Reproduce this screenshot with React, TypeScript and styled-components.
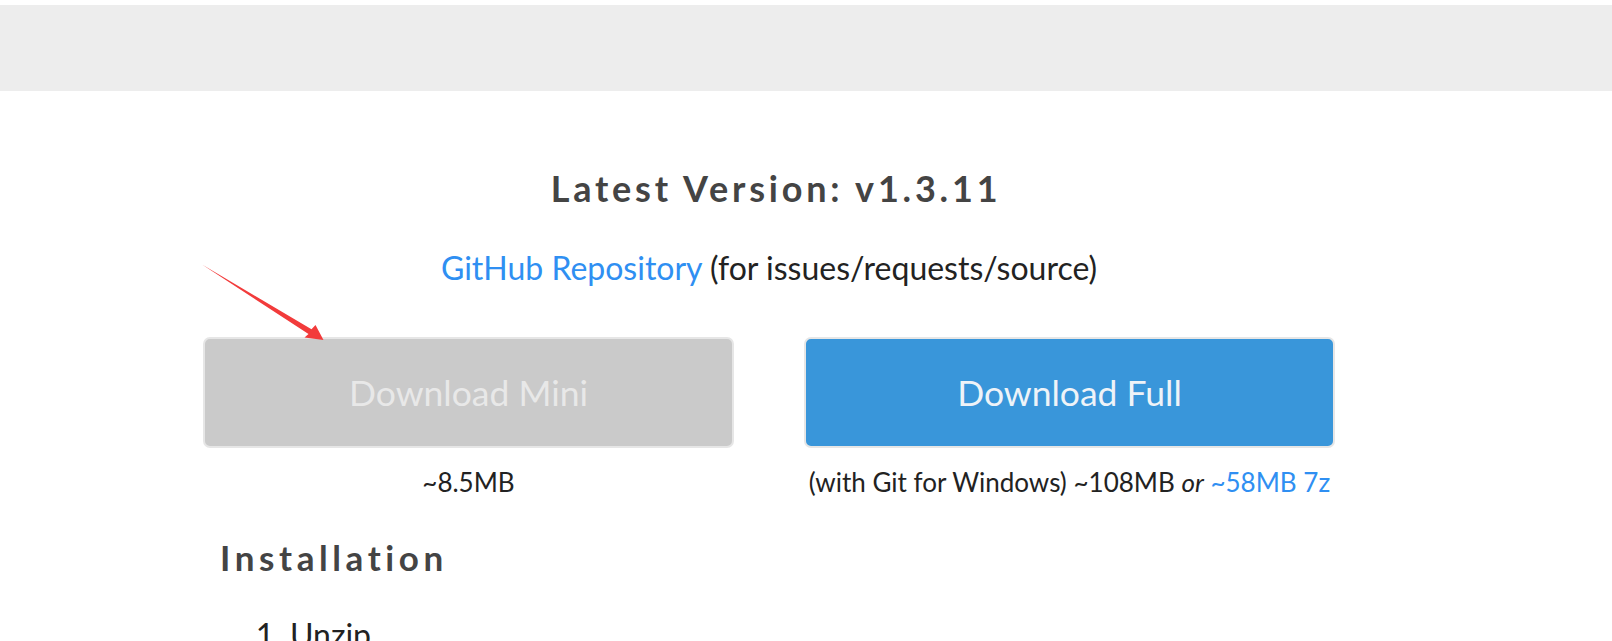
import React from "react";
import styled, { createGlobalStyle } from "styled-components";

const Global = createGlobalStyle`
  html, body { margin: 0; padding: 0; background: #ffffff; }
  body { font-family: Lato, "Open Sans", sans-serif; color: #222; }
`;

const Page = styled.div`
  position: relative;
  width: 1612px;
  height: 641px;
  overflow: hidden;
  padding-top: 5px;
  box-sizing: border-box;
`;

const TopBar = styled.header`
  height: 86px;
  background: #ededed;
`;

const Main = styled.main`
  width: 1132px;
  margin-left: 203px;
  display: flex;
  flex-direction: column;
`;

const Title = styled.h1`
  margin: 75px 0 0 0;
  padding-left: 14px;
  font-size: 36px;
  line-height: 44px;
  font-weight: 700;
  letter-spacing: 3.8px;
  color: #444444;
  text-align: center;
`;

const RepoLine = styled.p`
  margin: 39px 0 0 0;
  font-size: 32px;
  line-height: 38px;
  text-align: center;
  color: #222;
`;

const Link = styled.a`
  color: #2f8ff2;
  text-decoration: none;
`;

const Downloads = styled.div`
  margin-top: 50px;
  display: grid;
  grid-template-columns: 531px 531px;
  column-gap: 70px;
`;

const DownloadCol = styled.div`
  display: flex;
  flex-direction: column;
  align-items: stretch;
`;

const DownloadButton = styled.a<{ $variant: "mini" | "full" }>`
  height: 111px;
  box-sizing: border-box;
  border: 2px solid #e6e6e6;
  border-radius: 7px;
  display: flex;
  align-items: center;
  justify-content: center;
  font-size: 35.5px;
  font-weight: 400;
  background: ${(p) => (p.$variant === "mini" ? "#cacaca" : "#3996da")};
  color: ${(p) => (p.$variant === "mini" ? "#e8e8e8" : "#eef3f8")};
  text-decoration: none;
`;

const Size = styled.div`
  margin-top: 18px;
  font-size: 26px;
  line-height: 32px;
  text-align: center;
  color: #222;
  em { font-style: italic; }
`;

const SectionTitle = styled.h2`
  margin: 37px 0 0 17px;
  font-size: 35px;
  line-height: 44px;
  font-weight: 700;
  letter-spacing: 4.6px;
  color: #444444;
`;

const Steps = styled.ol`
  margin: 37px 0 0 0;
  padding-left: 87px;
  font-size: 32px;
  line-height: 38px;
  color: #222;
`;

const Arrow = styled.svg`
  position: absolute;
  left: 0;
  top: 0;
  pointer-events: none;
`;

export default function App() {
  return (
    <>
      <Global />
      <Page>
        <TopBar />
        <Main>
          <Title>Latest Version: v1.3.11</Title>
          <RepoLine>
            <Link href="#">GitHub Repository</Link> (for issues/requests/source)
          </RepoLine>
          <Downloads>
            <DownloadCol>
              <DownloadButton $variant="mini" href="#">Download Mini</DownloadButton>
              <Size>~8.5MB</Size>
            </DownloadCol>
            <DownloadCol>
              <DownloadButton $variant="full" href="#">Download Full</DownloadButton>
              <Size>
                (with Git for Windows) ~108MB <em>or</em> <Link href="#">~58MB 7z</Link>
              </Size>
            </DownloadCol>
          </Downloads>
          <SectionTitle>Installation</SectionTitle>
          <Steps>
            <li>Unzip</li>
          </Steps>
        </Main>
        <Arrow width="1612" height="641" viewBox="0 0 1612 641">
          <polygon
            points="202,264.5 311.5,329.3 315.5,325 323.5,340 304.5,337.5 308.5,334"
            fill="#f23b3b"
          />
        </Arrow>
      </Page>
    </>
  );
}
